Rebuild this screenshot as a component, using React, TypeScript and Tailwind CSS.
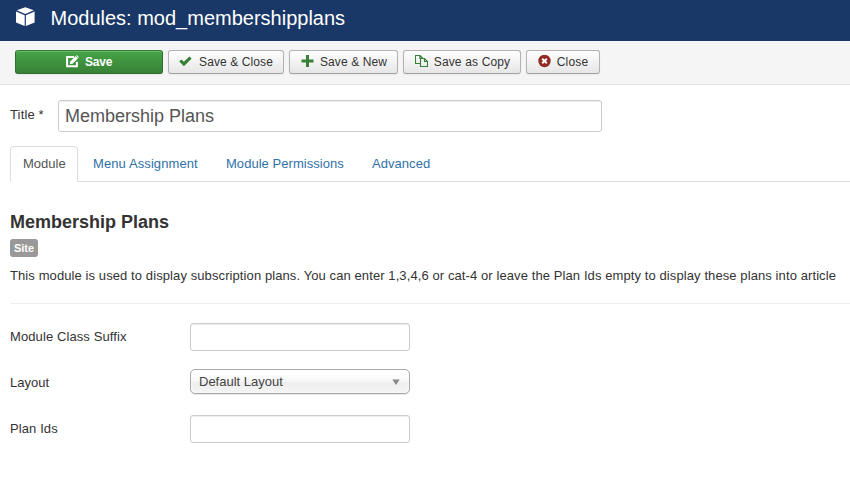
import React from "react";

const buttonBase =
  "flex h-6 shrink-0 items-center justify-center whitespace-pre rounded-[3px] border text-[12px] leading-[18px]";
const plainButton =
  " border-[#b3b3b3] border-b-[#a2a2a2] bg-linear-to-b from-white to-[#e6e6e6] text-[#333] shadow-[inset_0_1px_0_rgba(255,255,255,0.2),0_1px_2px_rgba(0,0,0,0.05)]";
const field =
  "block rounded-[3px] border border-[#ccc] bg-white text-[#555] shadow-[inset_0_1px_1px_rgba(0,0,0,0.075)] outline-none";

function CubeIcon() {
  return (
    <svg width="20" height="20" viewBox="0 0 20 20" fill="#fff" className="shrink-0">
      <path d="M10.3 0.2 18.8 3.2 10.3 6.9 1.8 3.2Z" />
      <path d="M1 4.6 9.7 8.3V18.9L1 15.5Z" />
      <path d="M19.6 4.6 10.9 8.3V18.9L19.6 15.5Z" />
    </svg>
  );
}

function EditIcon() {
  return (
    <svg width="13" height="13" viewBox="0 0 13 13" fill="none" className="mb-px shrink-0">
      <path d="M8 2H1.1V11.2H10.9V6.8" stroke="#fff" strokeWidth="2" />
      <path d="M3.7 9.2 4.2 6.5 9.7 1 12 3.3 6.5 8.8Z" fill="#fff" />
      <path d="M10.2 0.5 10.8 0 13 2.2 12.5 2.9Z" fill="#fff" />
    </svg>
  );
}

function CheckIcon() {
  return (
    <svg width="13" height="12" viewBox="0 0 13 12" className="shrink-0">
      <path d="M0.2 5.6 2.4 3.4 4.9 5.8 10.4 0.4 12.7 2.6 4.9 10.2Z" fill="#378137" />
    </svg>
  );
}

function PlusIcon() {
  return (
    <svg width="13" height="13" viewBox="0 0 13 13" className="mb-px shrink-0">
      <path d="M5 0H8V4.5H12.5V7.5H8V12H5V7.5H0.5V4.5H5Z" fill="#378137" />
    </svg>
  );
}

function CopyIcon() {
  return (
    <svg width="13" height="13" viewBox="0 0 13 13" fill="none" stroke="#378137" strokeWidth="1.1" className="mb-px shrink-0">
      <path d="M5 8.5H0.5V0.5H5L7.5 3V3.5M4.8 0.5V3.2H7.5" />
      <path d="M5.5 3.5H9.5L12.5 6.5V11.5H5.5ZM9.5 3.5V6.5H12.5" />
    </svg>
  );
}

function CloseIcon() {
  return (
    <svg width="13" height="13" viewBox="0 0 13 13" className="mb-px shrink-0">
      <circle cx="6.5" cy="6" r="6.2" fill="#942a25" />
      <path d="M4.2 3.7 8.8 8.3M8.8 3.7 4.2 8.3" stroke="#fff" strokeWidth="2" />
    </svg>
  );
}

export default function App() {
  return (
    <div className="h-[494px] w-[850px] overflow-hidden bg-white font-['Liberation_Sans',Arial,sans-serif] text-[13px] leading-[18px] text-[#333]">
      <header className="flex h-[41px] items-start bg-[#1a3867] pl-[15px] text-white">
        <div className="pt-[7px]">
          <CubeIcon />
        </div>
        <h1 className="ml-[15.5px] whitespace-nowrap pt-[3px] text-[20px] leading-[30px]">
          Modules: mod_membershipplans
        </h1>
      </header>

      <div className="flex h-11 gap-[5px] border-b border-[#e3e3e3] bg-[#f5f5f5] pl-[15px] pt-[9px]">
        <button className={buttonBase + " w-[148px] gap-[6px] border-[#2f6f2f] border-t-[#378137] bg-linear-to-b from-[#46a546] to-[#378137] font-bold text-white shadow-[inset_0_1px_0_rgba(255,255,255,0.2),0_1px_2px_rgba(0,0,0,0.05)]"}>
          <EditIcon />
          <span className="tracking-[-0.2px]">Save</span>
        </button>
        <button className={buttonBase + plainButton + " w-[116px] gap-[7px]"}>
          <CheckIcon />
          <span className="tracking-[0.1px]">Save &amp; Close</span>
        </button>
        <button className={buttonBase + plainButton + " w-[109px] gap-[6px] pl-px"}>
          <PlusIcon />
          <span className="tracking-[0.1px]">Save &amp; New</span>
        </button>
        <button className={buttonBase + plainButton + " w-[118px] gap-[6px] pl-px"}>
          <CopyIcon />
          <span className="tracking-[0.15px]">Save as Copy</span>
        </button>
        <button className={buttonBase + plainButton + " w-[74px] gap-[6px]"}>
          <CloseIcon />
          <span className="tracking-[0.15px]">Close</span>
        </button>
      </div>

      <main className="pl-[10px]">
        <div className="flex pt-[15px]">
          <label htmlFor="title" className="w-12 shrink-0 whitespace-nowrap pt-[6px] tracking-[0.15px]">
            Title <span>*</span>
          </label>
          <input
            id="title"
            defaultValue="Membership Plans"
            className={field + " h-8 w-[544px] px-[6px] text-[18px] leading-[22px]"}
          />
        </div>

        <nav className="mt-[14px] flex h-9 border-b border-[#ddd]">
          <a className="-mb-px h-9 w-[68px] rounded-t-[4px] border border-b-0 border-[#ddd] bg-white pl-3 pt-[8px] text-[#555]">
            Module
          </a>
          <a className="ml-[15px] w-[133px] whitespace-nowrap pt-[9px] tracking-[0.1px] text-[#3071a9]">Menu Assignment</a>
          <a className="w-[146px] whitespace-nowrap pt-[9px] tracking-[0.04px] text-[#3071a9]">Module Permissions</a>
          <a className="pt-[9px] tracking-[0.05px] text-[#3071a9]">Advanced</a>
        </nav>

        <h2 className="mt-[30px] text-[18px] font-bold leading-5">Membership Plans</h2>
        <span className="mt-[7px] flex h-[18px] w-7 items-center justify-center rounded-[3px] bg-[#999] text-[11px] font-bold leading-[14px] text-white">
          Site
        </span>
        <p className="mt-[10px] whitespace-nowrap tracking-[0.095px]">
          This module is used to display subscription plans. You can enter 1,3,4,6 or cat-4 or leave the Plan Ids empty to display these plans into article
        </p>
        <hr className="mt-[18px] border-t border-[#eee]" />

        <div className="mt-[19px] flex h-[46px]">
          <label htmlFor="suffix" className="w-[180px] pt-[5px] tracking-[0.1px]">Module Class Suffix</label>
          <input id="suffix" className={field + " h-7 w-[220px] px-[6px]"} />
        </div>
        <div className="flex h-[46px]">
          <span className="w-[180px] pt-[5px]">Layout</span>
          <button className="flex h-[25px] w-[220px] items-center justify-between rounded-[5px] border border-[#aaa] bg-[linear-gradient(#fff_20%,#f6f6f6_50%,#eee_52%,#f4f4f4_100%)] pl-2 pr-[9px] text-[#444] shadow-[inset_0_0_3px_#fff,0_1px_1px_rgba(0,0,0,0.1)]">
            <span>Default Layout</span>
            <svg width="8" height="6" viewBox="0 0 8 6">
              <path d="M0.3 0.5H7.7L4 6Z" fill="#888" />
            </svg>
          </button>
        </div>
        <div className="flex h-[46px]">
          <label htmlFor="plans" className="w-[180px] pt-[5px] tracking-[0.1px]">Plan Ids</label>
          <input id="plans" className={field + " h-7 w-[220px] px-[6px]"} />
        </div>
      </main>
    </div>
  );
}
